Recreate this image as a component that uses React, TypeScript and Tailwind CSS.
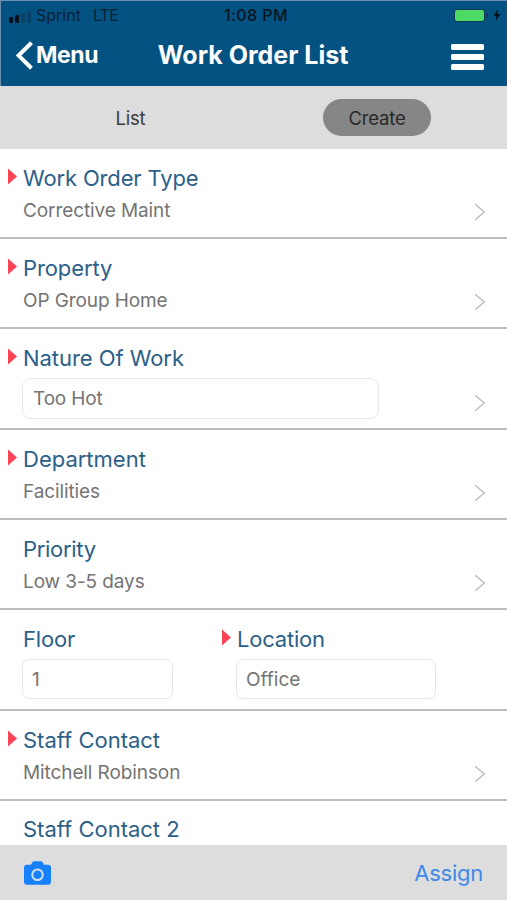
import type { ReactNode } from "react";

function Marker() {
  return (
    <svg className="mt-[4px] h-[17px] w-[9px] shrink-0" viewBox="0 0 9 17">
      <path d="M0 .5 9 8.5 0 16.5Z" fill="#fb4556" />
    </svg>
  );
}

function Chevron() {
  return (
    <svg className="h-[18px] w-[12px] shrink-0" viewBox="0 0 12 18" fill="none">
      <path d="M1.2 1.3 10.3 9 1.2 16.7" stroke="#b9b9b9" strokeWidth="1.3" />
    </svg>
  );
}

function Label({ text, required = false, className = "" }: { text: string; required?: boolean; className?: string }) {
  return (
    <div className="flex h-[28px]">
      <div className="flex w-[15px] shrink-0">{required && <Marker />}</div>
      <span className={`text-[22px] leading-[28px] whitespace-nowrap text-[#2b6089] ${className}`}>{text}</span>
    </div>
  );
}

function Value({ children }: { children: ReactNode }) {
  return (
    <div className="mt-[5px] ml-[15px] text-[19px] leading-[27px] tracking-[-0.1px] whitespace-nowrap text-[#747474]">
      {children}
    </div>
  );
}

function Row({
  label,
  value,
  required,
  boxed,
  className,
  labelClass,
}: {
  label: string;
  value: string;
  required?: boolean;
  boxed?: boolean;
  className: string;
  labelClass?: string;
}) {
  return (
    <div className={`flex justify-between border-b-2 border-[#bdbdbd] pt-[15px] pr-[21px] pl-[8px] ${className}`}>
      <div>
        <Label text={label} required={required} className={labelClass} />
        {boxed ? (
          <div className="mt-[6px] ml-[14px] flex h-[41px] w-[357px] items-center rounded-[9px] border-[1.5px] border-[#e8e8e8] pt-[2px] pl-[10px] text-[19px] tracking-[-0.15px] text-[#747474]">
            {value}
          </div>
        ) : (
          <Value>{value}</Value>
        )}
      </div>
      <div className="flex items-end pb-[16px]">
        <Chevron />
      </div>
    </div>
  );
}

export default function App() {
  return (
    <div className="flex h-[900px] w-[507px] flex-col overflow-hidden bg-white font-['Inter','Liberation_Sans',sans-serif]">
      <header className="h-[86px] shrink-0 border-t border-l border-[#6f8fb0] bg-[#035281] text-white">
        <div className="grid h-[28px] grid-cols-3 items-center pr-[6px] pl-[8px] text-[16px] text-[#0a2236]">
          <div className="flex items-center">
            <div className="mt-[3px] mr-[5px] flex items-end gap-[2px]">
              <i className="h-[6px] w-[4px] rounded-[1px] bg-[#06111b]" />
              <i className="h-[8px] w-[4px] rounded-[1px] bg-[#06111b]" />
              <i className="h-[10px] w-[4px] rounded-[1px] bg-[#0b4166]" />
              <i className="h-[12px] w-[4px] rounded-[1px] bg-[#0b4166]" />
            </div>
            <span>Sprint</span>
            <span className="ml-[12px] tracking-[-0.8px]">LTE</span>
          </div>
          <div className="pl-[2px] text-center font-medium tracking-[0.4px] whitespace-nowrap text-[#071421]">
            1:08 PM
          </div>
          <div className="flex items-center justify-end">
            <div className="h-[13px] w-[31px] rounded-[3px] border border-[#0b3a56] bg-[#4cd964]" />
            <i className="ml-[1px] h-[5px] w-[2px] rounded-r bg-[#0b3a56]" />
            <svg className="ml-[5px] h-[12px] w-[8px]" viewBox="0 0 8 12">
              <path d="M5 0 .5 6.8h3L2.8 12 7.5 5H4.3Z" fill="#04101a" />
            </svg>
          </div>
        </div>
        <div className="grid h-[52px] grid-cols-[115px_1fr_115px] items-center">
          <div className="flex items-center pl-[15px]">
            <svg className="h-[29px] w-[18px]" viewBox="0 0 18 29" fill="none">
              <path d="M15.5 1.8 2.5 14.5 15.5 27.2" stroke="white" strokeWidth="4" />
            </svg>
            <span className="ml-[2px] text-[23px] font-bold tracking-[-0.4px]">Menu</span>
          </div>
          <h1 className="pt-[2px] pr-[2px] text-center text-[25px] font-bold whitespace-nowrap">Work Order List</h1>
          <div className="mt-[4px] mr-[23px] flex flex-col gap-[4px] justify-self-end">
            <i className="h-[6px] w-[33px] rounded-[1.5px] bg-white" />
            <i className="h-[6px] w-[33px] rounded-[1.5px] bg-white" />
            <i className="h-[6px] w-[33px] rounded-[1.5px] bg-white" />
          </div>
        </div>
      </header>
      <nav className="flex h-[63px] shrink-0 items-center bg-[#ddd] text-[18.5px] tracking-[-0.2px] text-[#3c3c3c]">
        <div className="w-[261px] pt-[2px] text-center">List</div>
        <div className="ml-[62px] flex h-[37px] w-[108px] items-center justify-center rounded-full bg-[#868686] pt-[2px] text-[#282828]">
          Create
        </div>
      </nav>
      <main className="min-h-0 flex-1 overflow-hidden">
        <Row
          className="h-[90px]"
          label="Work Order Type"
          value="Corrective Maint"
          required
          labelClass="tracking-[-0.15px]"
        />
        <Row className="h-[90px]" label="Property" value="OP Group Home" required labelClass="tracking-[-0.1px]" />
        <Row className="h-[101px]" label="Nature Of Work" value="Too Hot" required boxed labelClass="tracking-[-0.05px]" />
        <Row className="h-[90px]" label="Department" value="Facilities" required />
        <Row className="h-[90px]" label="Priority" value="Low 3-5 days" labelClass="tracking-[-0.3px]" />
        <div className="flex h-[101px] border-b-2 border-[#bdbdbd] pt-[15px] pl-[8px]">
          <div className="w-[214px]">
            <Label text="Floor" className="tracking-[-0.2px]" />
            <div className="mt-[6px] ml-[14px] flex h-[40px] w-[151px] items-center rounded-[7px] border-[1.5px] border-[#e8e8e8] pt-[2px] pl-[9px] text-[19px] text-[#747474]">
              1
            </div>
          </div>
          <div>
            <Label text="Location" required className="tracking-[-0.2px]" />
            <div className="mt-[6px] ml-[14px] flex h-[40px] w-[200px] items-center rounded-[7px] border-[1.5px] border-[#e8e8e8] pt-[2px] pl-[9px] text-[19px] text-[#747474]">
              Office
            </div>
          </div>
        </div>
        <Row className="h-[90px]" label="Staff Contact" value="Mitchell Robinson" required />
        <div className="pt-[14px] pl-[8px]">
          <Label text="Staff Contact 2" />
        </div>
      </main>
      <footer className="flex h-[55px] shrink-0 items-center justify-between bg-[#ddd] pr-[24px] pl-[24px]">
        <svg className="h-[24px] w-[27px]" viewBox="0 0 27 24">
          <path
            d="M3 3.8h4L8.4 1.2Q9 .3 10 .3h7q1 0 1.6.9L20 3.8h4q3 0 3 3v14q0 3-3 3H3q-3 0-3-3v-14q0-3 3-3Z"
            fill="#1781fb"
          />
          <circle cx="13.5" cy="13.8" r="5.3" fill="none" stroke="#d5dfeb" strokeWidth="2" />
        </svg>
        <span className="pt-[2px] text-[22px] tracking-[-0.25px] text-[#3f8ae8]">Assign</span>
      </footer>
    </div>
  );
}
